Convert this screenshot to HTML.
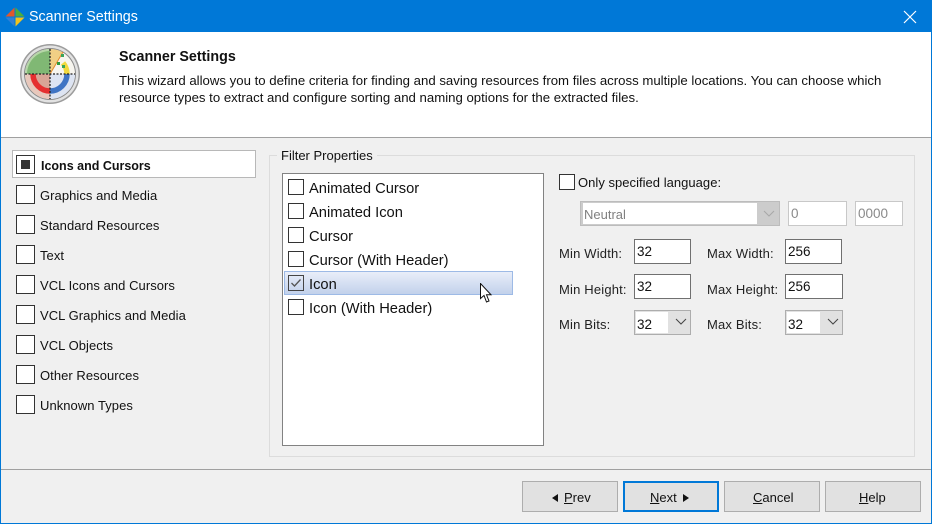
<!DOCTYPE html>
<html><head><meta charset="utf-8">
<style>
html,body{margin:0;padding:0;width:932px;height:524px;overflow:hidden;background:#f0f0f0}
body{position:relative;font-family:"Liberation Sans",sans-serif;font-size:14px;color:#111}
div{position:absolute;box-sizing:border-box}
.t{white-space:nowrap;line-height:18px;height:18px}
.cb{background:#fff;border:1px solid #333}
.in{background:#fff;border:1px solid #707070;font-size:13.5px;padding:4px 0 0 2px;line-height:16px}
.dis{background:#fff;border:1px solid #c8c8c8;color:#8a8a8a;font-size:13.5px;padding:4px 0 0 2px;line-height:16px}
.btn{background:#e1e1e1;border:1px solid #adadad;height:31px;width:96px;top:481px}
.s{font-size:13px;left:40px;letter-spacing:.05px}
.l{font-size:14.7px;left:309px}
.f{font-size:13px;letter-spacing:.18px;color:#222}
.b{font-size:13px;top:489px}
u{text-decoration:underline}
</style></head><body>
<div style="left:0;top:0;width:932px;height:32px;background:#0078d7"></div>
<svg style="position:absolute;left:5px;top:7px" width="20" height="20" viewBox="0 0 20 20"><path d="M9.500 .5L.5 9.500h9z" fill="#e2572b"/><path d="M10.500 .5L19.500 9.500h-9z" fill="#4cae3c"/><path d="M.5 10.500L9.500 19.500v-9z" fill="#2f7fd8"/><path d="M19.500 10.500L10.500 19.500v-9z" fill="#f2c31e"/></svg>
<div class="t" style="left:29px;top:8px;color:#fff;font-size:14.300px">Scanner Settings</div>
<svg style="position:absolute;left:903px;top:10px" width="14" height="14"><path d="M1 1L13 13M13 1L1 13" stroke="#fff" stroke-width="1.200" fill="none"/></svg>
<div style="left:0;top:32px;width:932px;height:105px;background:#fff"></div>
<div style="left:0;top:137px;width:932px;height:1px;background:#a0a0a0"></div>
<div style="left:0;top:469px;width:932px;height:1px;background:#a0a0a0"></div>
<div style="left:0;top:32px;width:1px;height:492px;background:#0078d7"></div>
<div style="left:931px;top:32px;width:1px;height:492px;background:#0078d7"></div>
<div style="left:0;top:523px;width:932px;height:1px;background:#0078d7"></div>

<svg style="position:absolute;left:19px;top:43px" width="62" height="62" viewBox="0 0 62 62">
<circle cx="31" cy="31" r="30" fill="#9c9c9c"/><circle cx="31" cy="31" r="28.500" fill="#e2e2e2"/><circle cx="31" cy="31" r="26" fill="#8a8a8a"/>
<circle cx="31" cy="31" r="25" fill="#f7f5ef"/>
<path d="M31 31V6A25 25 0 0 0 6 31z" fill="#b6d6a8"/><path d="M31 31V8A23 23 0 0 0 8 31z" fill="#80b874"/>
<path d="M31 31H6A25 25 0 0 0 31 56z" fill="#e8c8bc"/><path d="M31 31H12A19 19 0 0 0 31 50z" fill="#d9a596"/>
<path d="M31 31V56A25 25 0 0 0 56 31z" fill="#dde4f2"/>
<path d="M14 31A17 17 0 0 0 31 48" fill="none" stroke="#e53030" stroke-width="5.500"/>
<path d="M31 48A17 17 0 0 0 48 31" fill="none" stroke="#3f74c4" stroke-width="5.500"/>
<path d="M31 31V6A25 25 0 0 1 44 9.500z" fill="#f0cf85"/>
<path d="M44 20A17 17 0 0 1 48 31" fill="none" stroke="#f2d93e" stroke-width="5.500"/>
<path d="M31 31L44 9" stroke="#e28a2a" stroke-width="1" fill="none"/>
<path d="M6 31H56M31 6V56" stroke="#222" stroke-width="1.300" stroke-dasharray="2 1.500" fill="none"/>
<rect x="42" y="11" width="3" height="3" fill="#3aa45a"/><rect x="38" y="19" width="3" height="3" fill="#2e9a3f"/><rect x="43" y="22" width="3" height="3" fill="#3aa45a"/>
</svg>

<div class="t" style="left:119px;top:48px;font-weight:bold;font-size:14.300px">Scanner Settings</div>
<div class="t" style="left:119px;top:72px;font-size:13.200px">This wizard allows you to define criteria for finding and saving resources from files across multiple locations. You can choose which</div>
<div class="t" style="left:119px;top:89px;font-size:13.200px">resource types to extract and configure sorting and naming options for the extracted files.</div>

<div style="left:12px;top:150px;width:244px;height:28px;background:#fff;border:1px solid #b8b8b8"></div>
<div class="cb" style="left:16px;top:155px;width:19px;height:19px"></div>
<div style="left:21px;top:160px;width:9px;height:9px;background:#333"></div>
<div class="t" style="left:41px;top:157px;font-weight:bold;font-size:12.500px">Icons and Cursors</div>

<div class="cb" style="left:16px;top:185px;width:19px;height:19px"></div><div class="t s" style="top:187px">Graphics and Media</div>
<div class="cb" style="left:16px;top:215px;width:19px;height:19px"></div><div class="t s" style="top:217px">Standard Resources</div>
<div class="cb" style="left:16px;top:245px;width:19px;height:19px"></div><div class="t s" style="top:247px">Text</div>
<div class="cb" style="left:16px;top:275px;width:19px;height:19px"></div><div class="t s" style="top:277px">VCL Icons and Cursors</div>
<div class="cb" style="left:16px;top:305px;width:19px;height:19px"></div><div class="t s" style="top:307px">VCL Graphics and Media</div>
<div class="cb" style="left:16px;top:335px;width:19px;height:19px"></div><div class="t s" style="top:337px">VCL Objects</div>
<div class="cb" style="left:16px;top:365px;width:19px;height:19px"></div><div class="t s" style="top:367px">Other Resources</div>
<div class="cb" style="left:16px;top:395px;width:19px;height:19px"></div><div class="t s" style="top:397px">Unknown Types</div>

<div style="left:269px;top:155px;width:646px;height:302px;border:1px solid #dcdcdc"></div>
<div class="t" style="left:277px;top:147px;background:#f0f0f0;padding:0 4px;font-size:13px">Filter Properties</div>

<div style="left:282px;top:173px;width:262px;height:273px;background:#fff;border:1px solid #828282"></div>
<div style="left:284px;top:271px;width:229px;height:24px;background:linear-gradient(#e9eef9,#c2d1eb);border:1px solid #9dbae6"></div>
<div class="cb" style="left:288px;top:179px;width:16px;height:16px"></div><div class="t l" style="top:180px">Animated Cursor</div>
<div class="cb" style="left:288px;top:203px;width:16px;height:16px"></div><div class="t l" style="top:204px">Animated Icon</div>
<div class="cb" style="left:288px;top:227px;width:16px;height:16px"></div><div class="t l" style="top:228px">Cursor</div>
<div class="cb" style="left:288px;top:251px;width:16px;height:16px"></div><div class="t l" style="top:252px">Cursor (With Header)</div>
<div style="left:288px;top:275px;width:16px;height:16px;border:1px solid #444"></div>
<svg style="position:absolute;left:288px;top:275px" width="16" height="16"><path d="M3.500 8L6.500 11L12.500 4.500" stroke="#555" stroke-width="1.300" fill="none"/></svg>
<div class="t l" style="top:276px">Icon</div>
<div class="cb" style="left:288px;top:299px;width:16px;height:16px"></div><div class="t l" style="top:300px">Icon (With Header)</div>
<svg style="position:absolute;left:480px;top:283px" width="14" height="21"><path d="M.5 .5V15.500L4 12.500L6.500 19L9 18L6.500 11.800H11z" fill="#fff" stroke="#111" stroke-width="1"/></svg>

<div class="cb" style="left:559px;top:174px;width:16px;height:16px"></div>
<div class="t" style="left:578px;top:174px;font-size:13px;letter-spacing:.03px">Only specified language:</div>

<div style="left:580px;top:201px;width:200px;height:25px;background:#cccccc;border:1px solid #bcbcbc"></div>
<div style="left:583px;top:203px;width:174px;height:21px;background:#fff"></div>
<div class="t" style="left:584px;top:206px;font-size:13px;color:#808080">Neutral</div>
<svg style="position:absolute;left:763px;top:210px" width="12" height="8"><path d="M1 1L6 6L11 1" stroke="#a8a8a8" fill="none"/></svg>
<div class="dis" style="left:788px;top:201px;width:59px;height:25px">0</div>
<div class="dis" style="left:855px;top:201px;width:48px;height:25px">0000</div>

<div class="t f" style="left:559px;top:245px">Min Width:</div>
<div class="in" style="left:634px;top:239px;width:57px;height:25px">32</div>
<div class="t f" style="left:707px;top:245px">Max Width:</div>
<div class="in" style="left:785px;top:239px;width:57px;height:25px">256</div>

<div class="t f" style="left:559px;top:281px">Min Height:</div>
<div class="in" style="left:634px;top:274px;width:57px;height:25px">32</div>
<div class="t f" style="left:707px;top:281px">Max Height:</div>
<div class="in" style="left:785px;top:274px;width:58px;height:25px">256</div>

<div class="t f" style="left:559px;top:316px">Min Bits:</div>
<div style="left:634px;top:310px;width:57px;height:25px;background:#e1e1e1;border:1px solid #adadad"></div>
<div style="left:636px;top:312px;width:32px;height:21px;background:#fff"></div>
<div class="t" style="left:637px;top:316px;font-size:13.500px">32</div>
<svg style="position:absolute;left:675px;top:318px" width="12" height="8"><path d="M1 1L6 6L11 1" stroke="#444" fill="none"/></svg>
<div class="t f" style="left:707px;top:316px">Max Bits:</div>
<div style="left:785px;top:310px;width:58px;height:25px;background:#e1e1e1;border:1px solid #adadad"></div>
<div style="left:787px;top:312px;width:33px;height:21px;background:#fff"></div>
<div class="t" style="left:788px;top:316px;font-size:13.500px">32</div>
<svg style="position:absolute;left:827px;top:318px" width="12" height="8"><path d="M1 1L6 6L11 1" stroke="#444" fill="none"/></svg>

<div class="btn" style="left:522px"></div>
<svg style="position:absolute;left:552px;top:494px" width="7" height="8"><path d="M6 0V8L0 4z" fill="#111"/></svg>
<div class="t b" style="left:564px"><u>P</u>rev</div>
<div class="btn" style="left:623px;border:2px solid #0078d7"></div>
<div class="t b" style="left:650px"><u>N</u>ext</div>
<svg style="position:absolute;left:683px;top:494px" width="7" height="8"><path d="M0 0V8L6 4z" fill="#111"/></svg>
<div class="btn" style="left:724px"></div>
<div class="t b" style="left:753px"><u>C</u>ancel</div>
<div class="btn" style="left:825px"></div>
<div class="t b" style="left:859px"><u>H</u>elp</div>
</body></html>
